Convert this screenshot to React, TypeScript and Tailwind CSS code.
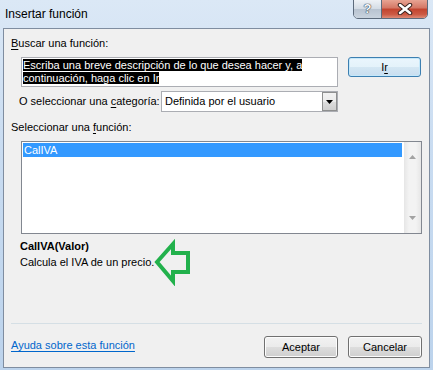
import React from 'react';

const Button = ({ label }: { label: string }) => (
  <button className="w-[74px] h-[22px] rounded-[3px] border border-[#707070] shadow-[inset_0_0_0_1px_#fcfcfc] bg-[linear-gradient(#f2f2f2_0%,#ebebeb_50%,#dddddd_51%,#cfcfcf_100%)] text-[11px] leading-[14px] flex items-center justify-center">
    {label}
  </button>
);

export default function App() {
  return (
    <div className="w-[433px] h-[370px] relative overflow-hidden flex flex-col font-['Liberation_Sans',sans-serif] text-[11px] text-black bg-[linear-gradient(180deg,#dbe8f6_0%,#c9dcf1_40%,#bcd3ec_100%)]">
      {/* title bar */}
      <div className="h-[28px] flex items-start pl-[5px] pr-[5px]">
        <div className="mt-[6px] leading-[16px] text-[12px]">Insertar función</div>
        <div className="ml-auto flex h-[20px] -mt-px rounded-b-[5px] border border-[#5d6b7c] overflow-hidden">
          <div className="w-[28px] h-full flex items-center justify-center bg-[linear-gradient(#eef2f6_0%,#d3dbe4_50%,#b8c3d0_51%,#c9d3de_100%)] border-r border-[#5d6b7c] text-[13px] font-bold text-[#f7f9fb] [text-shadow:0_0_1px_#34404e,0_0_1px_#34404e,0_0_1px_#34404e]">
            ?
          </div>
          <div className="w-[45px] h-full flex items-center justify-center bg-[linear-gradient(#e8a493_0%,#d47664_45%,#c2432e_50%,#cc5a44_80%,#de8b77_100%)]">
            <svg width="16" height="12" viewBox="0 0 16 12">
              <path d="M3 2 L13 10 M13 2 L3 10" stroke="#3b2622" strokeWidth="4.5" strokeLinecap="round" />
              <path d="M3 2 L13 10 M13 2 L3 10" stroke="#ffffff" strokeWidth="2.5" strokeLinecap="round" />
            </svg>
          </div>
        </div>
      </div>

      {/* client area */}
      <div className="mx-[3px] mb-[2px] h-[340px] border border-[#7f8da0] bg-[#f0f0f0] flex flex-col">
        <div className="mt-[7px] ml-[7px] leading-[15px]">
          <span className="underline underline-offset-2">B</span>uscar una función:
        </div>

        <div className="mt-[6px] flex items-start">
          <div className="ml-[17px] w-[317px] h-[30px] border border-[#abadb3] bg-white px-px pt-px leading-[13px] whitespace-nowrap">
            <span className="bg-black text-white">Escriba una breve descripción de lo que desea hacer y, a</span>
            <br />
            <span className="bg-black text-white">continuación, haga clic en Ir</span>
          </div>
          <button className="ml-[10px] w-[73px] h-[20px] rounded-[3px] border border-[#3c7fb1] shadow-[inset_0_0_0_1px_#c5e8fa] bg-[linear-gradient(#eaf6fd_0%,#e4f2fa_50%,#d4e7f3_51%,#c9def0_100%)] text-[11px] leading-[14px] flex items-center justify-center">
            I<span className="underline underline-offset-2">r</span>
          </button>
        </div>

        <div className="mt-[4px] flex items-center">
          <div className="ml-[15px] w-[142px] leading-[15px] whitespace-nowrap">
            O seleccionar una <span className="underline underline-offset-2">c</span>ategoría:
          </div>
          <div className="w-[177px] h-[21px] border border-[#abadb3] bg-white flex items-center">
            <div className="pl-[3px] flex-1 leading-[15px]">Definida por el usuario</div>
            <div className="w-[15px] h-[19px] border border-[#8e8f8f] bg-[linear-gradient(#f2f2f2_0%,#ebebeb_50%,#dddddd_51%,#cfcfcf_100%)] flex items-center justify-center">
              <svg width="7" height="4" viewBox="0 0 7 4">
                <path d="M0 0 H7 L3.5 4 Z" fill="#000" />
              </svg>
            </div>
          </div>
        </div>

        <div className="mt-[8px] ml-[7px] leading-[15px]">
          Seleccionar una <span className="underline underline-offset-2">f</span>unción:
        </div>

        <div className="mt-[6px] ml-[17px] w-[401px] h-[93px] border border-[#828790] bg-white flex">
          <div className="flex-1 pt-px pl-px">
            <div className="h-[14px] bg-[#3399ff] text-white leading-[14px] pl-[1px]">CalIVA</div>
          </div>
          <div className="w-[17px] ml-[2px] h-full flex flex-col items-center justify-between py-[13px] bg-[linear-gradient(90deg,#e6e6e6,#f3f3f3_30%,#f3f3f3_70%,#e6e6e6)]">
            <svg width="7" height="4" viewBox="0 0 7 4">
              <path d="M0 4 H7 L3.5 0 Z" fill="#a3a3a3" />
            </svg>
            <svg width="7" height="4" viewBox="0 0 7 4">
              <path d="M0 0 H7 L3.5 4 Z" fill="#a3a3a3" />
            </svg>
          </div>
        </div>

        <div className="mt-[5px] ml-[16px] leading-[15px] font-bold">CalIVA(Valor)</div>
        <div className="mt-[1px] ml-[16px] leading-[15px]">Calcula el IVA de un precio.</div>

        <div className="mt-[53px] mx-[7px] h-px bg-[#d5dfe5]" />

        <div className="mt-[12px] flex items-start pl-[7px] pr-[7px]">
          <a className="mt-[2px] leading-[15px] text-[#0066cc] underline underline-offset-2 cursor-pointer">
            Ayuda sobre esta función
          </a>
          <div className="ml-auto flex gap-[10px]">
            <Button label="Aceptar" />
            <Button label="Cancelar" />
          </div>
        </div>
      </div>

      {/* annotation arrow */}
      <svg className="absolute left-[150px] top-[238px]" width="45" height="48" viewBox="0 0 45 48">
        <polygon
          points="7,24 23,6 23,15 38,15 38,34 23,34 23,43"
          fill="none"
          stroke="#22b14c"
          strokeWidth="4"
        />
      </svg>
    </div>
  );
}
